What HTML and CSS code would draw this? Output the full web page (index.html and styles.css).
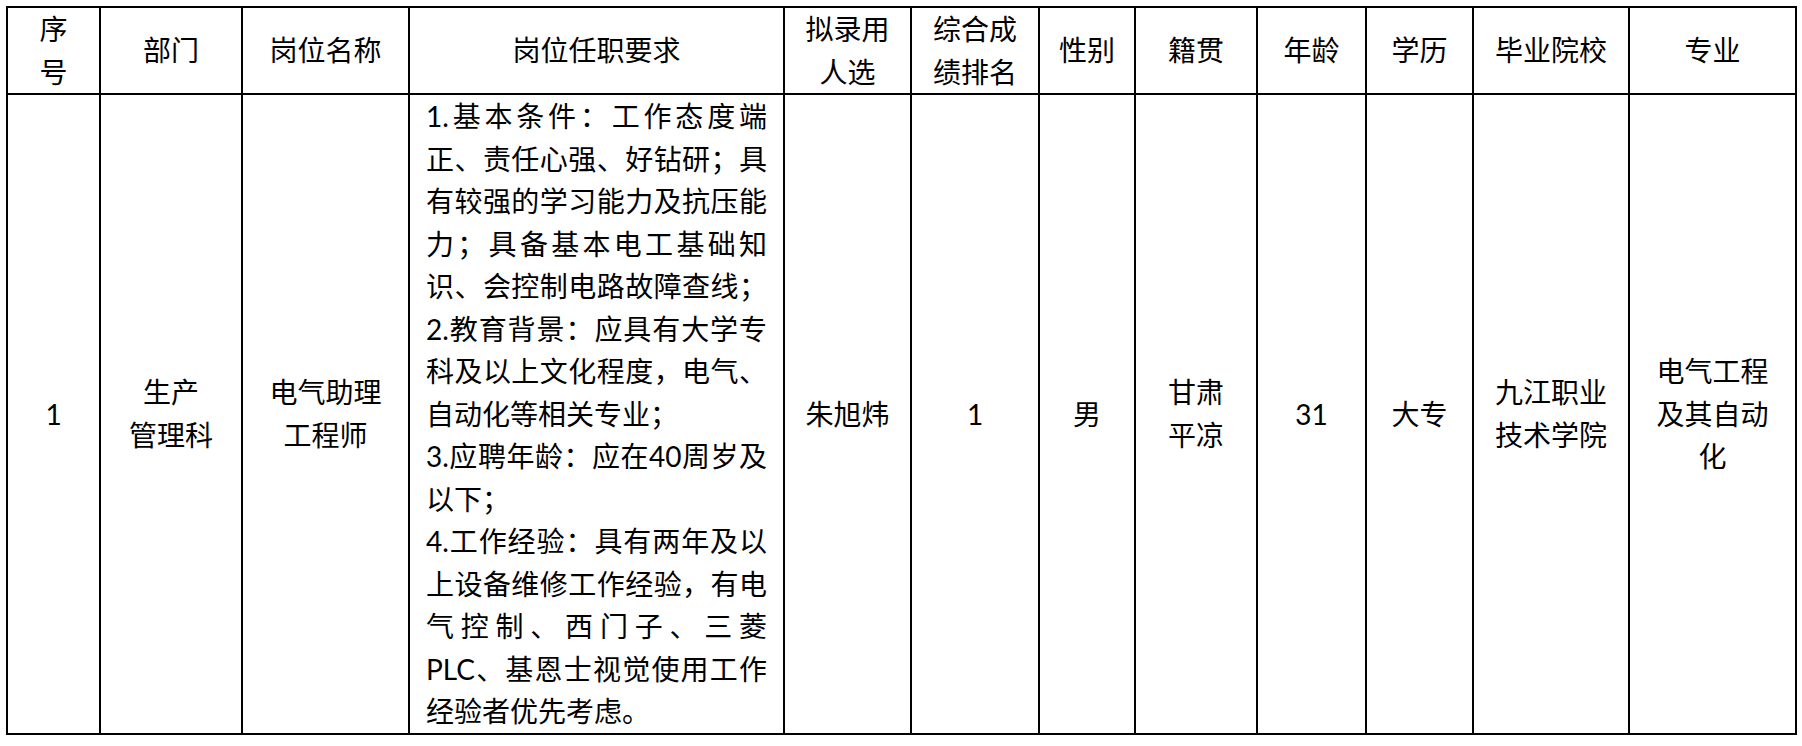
FILE: index.html
```html
<!DOCTYPE html>
<html lang="zh-CN">
<head>
<meta charset="utf-8">
<title>岗位拟录用人选</title>
<link rel="stylesheet" href="styles.css">
</head>
<body>
<table class="sheet">
  <colgroup>
    <col class="c-no">
    <col class="c-dept">
    <col class="c-post">
    <col class="c-req">
    <col class="c-name">
    <col class="c-rank">
    <col class="c-sex">
    <col class="c-origin">
    <col class="c-age">
    <col class="c-edu">
    <col class="c-school">
    <col class="c-major">
  </colgroup>
  <thead>
    <tr class="head">
      <th>序<br>号</th>
      <th>部门</th>
      <th>岗位名称</th>
      <th>岗位任职要求</th>
      <th>拟录用<br>人选</th>
      <th>综合成<br>绩排名</th>
      <th>性别</th>
      <th>籍贯</th>
      <th>年龄</th>
      <th>学历</th>
      <th>毕业院校</th>
      <th>专业</th>
    </tr>
  </thead>
  <tbody>
    <tr class="row">
      <td>1</td>
      <td>生产<br>管理科</td>
      <td>电气助理<br>工程师</td>
      <td class="req">
        <span class="j">1.基本条件：工作态度端</span>
        <span class="j">正、责任心强、好钻研；具</span>
        <span class="j">有较强的学习能力及抗压能</span>
        <span class="j">力；具备基本电工基础知</span>
        <span class="j">识、会控制电路故障查线；</span>
        <span class="j">2.教育背景：应具有大学专</span>
        <span class="j">科及以上文化程度，电气、</span>
        <span class="l">自动化等相关专业；</span>
        <span class="j">3.应聘年龄：应在40周岁及</span>
        <span class="l">以下；</span>
        <span class="j">4.工作经验：具有两年及以</span>
        <span class="j">上设备维修工作经验，有电</span>
        <span class="j">气控制、西门子、三菱</span>
        <span class="j">PLC、基恩士视觉使用工作</span>
        <span class="l">经验者优先考虑。</span>
      </td>
      <td>朱旭炜</td>
      <td>1</td>
      <td>男</td>
      <td>甘肃<br>平凉</td>
      <td>31</td>
      <td>大专</td>
      <td>九江职业<br>技术学院</td>
      <td>电气工程<br>及其自动<br>化</td>
    </tr>
  </tbody>
</table>
</body>
</html>
```

FILE: styles.css
```css
* {
  box-sizing: border-box;
}

html,
body {
  margin: 0;
  background: #ffffff;
}

body {
  padding: 6px 0 0 6px;
  font-family: Lato, "Noto Sans CJK SC", sans-serif;
  color: #000000;
}

.sheet {
  border-collapse: collapse;
  table-layout: fixed;
  width: 1791px;
  font-size: 28px;
}

.sheet th,
.sheet td {
  border: 2px solid #000000;
  padding: 0;
  text-align: center;
  vertical-align: middle;
  font-weight: 400;
  line-height: 42.5px;
}

.head {
  height: 86px;
}

.c-no { width: 93px; }
.c-dept { width: 142px; }
.c-post { width: 167px; }
.c-req { width: 375px; }
.c-name { width: 127px; }
.c-rank { width: 128px; }
.c-sex { width: 96px; }
.c-origin { width: 122px; }
.c-age { width: 109px; }
.c-edu { width: 107px; }
.c-school { width: 156px; }
.c-major { width: 167px; }

.sheet td.req {
  text-align: left;
  padding: 0 16px;
}

.req .j {
  display: block;
  text-align: justify;
  text-align-last: justify;
}

.req .l {
  display: block;
  text-align: left;
}
```
